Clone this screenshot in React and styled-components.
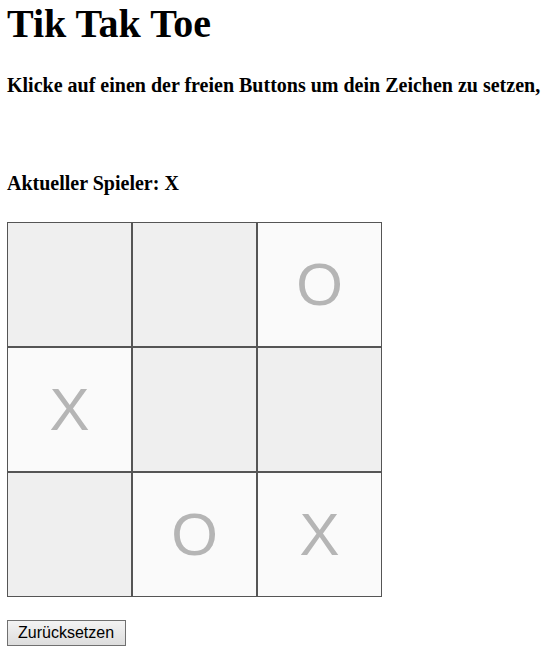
import React, { useState } from 'react';
import styled, { createGlobalStyle } from 'styled-components';

const START = ['', '', 'O', 'X', '', '', '', 'O', 'X'];

const App = () => {
    const [board, setBoard] = useState(START);
    const [player, setPlayer] = useState('X');

    const play = (i) => {
        if (board[i]) return;
        const next = [...board];
        next[i] = player;
        setBoard(next);
        setPlayer(player === 'X' ? 'O' : 'X');
    };

    const reset = () => {
        setBoard(Array(9).fill(''));
        setPlayer('X');
    };

    return (
        <Page>
            <GlobalStyle />
            <Title>Tik Tak Toe</Title>
            <Hint>Klicke auf einen der freien Buttons um dein Zeichen zu setzen,</Hint>
            <Status>Aktueller Spieler: {player}</Status>
            <Board>
                {board.map((mark, i) => (
                    <Cell key={i} $filled={!!mark} onClick={() => play(i)}>
                        {mark}
                    </Cell>
                ))}
            </Board>
            <Reset onClick={reset}>Zurücksetzen</Reset>
        </Page>
    );
};

export default App;

const GlobalStyle = createGlobalStyle`
    body {
        margin: 0;
        background: #fff;
        font-family: "Liberation Serif", "Times New Roman", serif;
        color: #000;
    }
`;

const Page = styled.div`
    display: flex;
    flex-direction: column;
    align-items: flex-start;
    padding: 0 7px;
`;

const Title = styled.h1`
    font-size: 40px;
    font-weight: 700;
    margin: 0;
    white-space: nowrap;
`;

const Hint = styled.h3`
    font-size: 20px;
    font-weight: 700;
    margin: 27px 0 0 0;
    white-space: nowrap;
`;

const Status = styled.h3`
    font-size: 20px;
    font-weight: 700;
    margin: 75px 0 0 0;
`;

const Board = styled.div`
    display: grid;
    grid-template-columns: repeat(3, 125px);
    grid-auto-rows: 125px;
    margin-top: 27px;
`;

const Cell = styled.button`
    box-sizing: border-box;
    width: 125px;
    height: 125px;
    padding: 0;
    border: 1px solid #555;
    background: ${p => (p.$filled ? '#fafafa' : '#efefef')};
    color: #b5b5b5;
    font-family: "Liberation Sans", Arial, sans-serif;
    font-size: 60px;
    line-height: 1;
    cursor: pointer;
`;

const Reset = styled.button`
    margin-top: 23px;
    padding: 3px 11px 3px 10px;
    border: 1px solid #707070;
    border-radius: 0;
    background: linear-gradient(#f3f3f3, #dddddd);
    font-family: "Liberation Sans", Arial, sans-serif;
    font-size: 16px;
    color: #000;
    cursor: pointer;
`;
